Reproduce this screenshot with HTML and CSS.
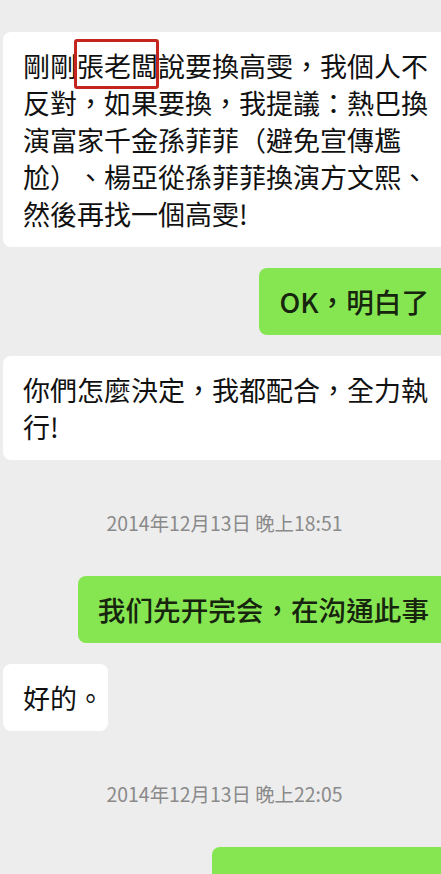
FILE: index.html
```html
<!DOCTYPE html>
<html lang="zh-Hant">
<head>
<meta charset="UTF-8">
<meta name="viewport" content="width=device-width, initial-scale=1.0">
<title>聊天記錄</title>
<link rel="stylesheet" href="styles.css">
</head>
<body>
<div class="chat">
    <div class="msg left">
        <div class="bubble">剛剛<span class="mark">張老闆</span>說要換高雯，我個人不反對，如果要換，我提議：熱巴換演富家千金孫菲菲（避免宣傳尷尬）、楊亞從孫菲菲換演方文熙、然後再找一個高雯!</div>
    </div>

    <div class="msg right">
        <div class="bubble green">OK，明白了</div>
    </div>

    <div class="msg left">
        <div class="bubble">你們怎麼決定，我都配合，全力執行!</div>
    </div>

    <div class="time">2014年12月13日 晚上18:51</div>

    <div class="msg right">
        <div class="bubble green">我们先开完会，在沟通此事</div>
    </div>

    <div class="msg left">
        <div class="bubble short">好的。</div>
    </div>

    <div class="time">2014年12月13日 晚上22:05</div>

    <div class="msg right">
        <div class="bubble green last">好的，辛苦大家</div>
    </div>
</div>
</body>
</html>
```

FILE: styles.css
```css
/* Page */
body {
    margin: 0;
    background: #ededed;
    overflow: hidden;
    font-family: "Noto Sans CJK TC", "Noto Sans CJK SC", sans-serif;
    color: #111111;
}

/* the chat column is a bit wider than the window, bubbles run off the right edge */
.chat {
    width: 449px;
    padding-top: 32px;
    display: flex;
    flex-direction: column;
}

.msg {
    display: flex;
    margin-top: 21px;
}

.msg:first-child {
    margin-top: 0;
}

.msg.left {
    justify-content: flex-start;
}

.msg.right {
    justify-content: flex-end;
}

.bubble {
    font-size: 27px;
    line-height: 37px;
    padding: 15px 20px;
    border-radius: 8px;
    background: #ffffff;
    max-width: 406px;
    text-spacing-trim: space-all;
    word-break: break-all;
}

.left .bubble {
    margin-left: 3px;
}

.bubble.short {
    padding-right: 4px;
}

.bubble.green {
    font-size: 27.6px;
    font-weight: 500;
    background: #86e652;
    color: #17250e;
}

/* only the top of the last message is in the shot */
.bubble.last {
    padding-top: 24px;
    padding-left: 24px;
}

/* red frame drawn over the name */
.mark {
    position: relative;
}

.mark::after {
    content: "";
    position: absolute;
    left: -3px;
    right: -1px;
    top: -7px;
    bottom: -4px;
    border: 3px solid #c4261f;
    border-radius: 3px;
}

.time {
    text-align: center;
    font-size: 19.4px;
    line-height: 24px;
    color: #8a8a8a;
    margin: 51px 0 41px;
}

.time + .msg {
    margin-top: 0;
}
```
